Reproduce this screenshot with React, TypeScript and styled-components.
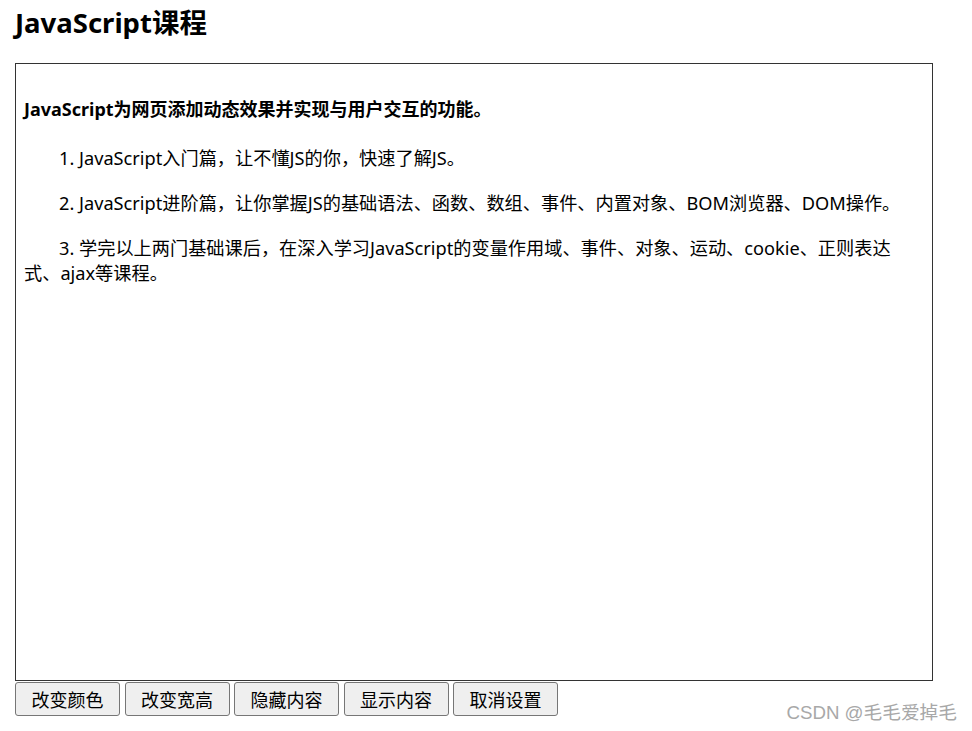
import { createGlobalStyle } from 'styled-components'
import styled from 'styled-components'

const GlobalStyle = createGlobalStyle`
  html, body {
    margin: 0;
    padding: 0;
    background: #fff;
  }
  body {
    font-family: 'Noto Sans', 'Noto Sans CJK SC', sans-serif;
    color: #000;
  }
`

const Page = styled.div`
  position: relative;
  width: 972px;
  height: 731px;
  padding: 6px 15px 0;
  box-sizing: border-box;
`

const Title = styled.h2`
  margin: 0 0 23px;
  font-size: 27.5px;
  line-height: 34px;
  font-weight: 700;
`

const Panel = styled.div`
  width: 918px;
  height: 618px;
  box-sizing: border-box;
  border: 1px solid #333;
  padding: 33px 8px 0;
`

const Lead = styled.h4`
  margin: 0 0 24px;
  font-size: 18px;
  line-height: 25px;
  font-weight: 700;
`

const Para = styled.p`
  margin: 0 0 20px;
  font-size: 18.2px;
  line-height: 25px;
  text-indent: 35px;
`

const ButtonRow = styled.div`
  display: flex;
  gap: 4.5px;
  margin-top: 1px;
`

const Button = styled.button`
  width: 105px;
  height: 34px;
  padding: 0;
  font-family: inherit;
  font-size: 18px;
  color: #000;
  background: #efefef;
  border: 1px solid #767676;
  border-radius: 3px;
`

const Watermark = styled.div`
  position: absolute;
  right: 15px;
  bottom: 7px;
  font-family: 'Liberation Sans', 'Noto Sans CJK SC', sans-serif;
  font-size: 18.7px;
  color: #a8a8a8;
`

const courses = [
  '1. JavaScript入门篇，让不懂JS的你，快速了解JS。',
  '2. JavaScript进阶篇，让你掌握JS的基础语法、函数、数组、事件、内置对象、BOM浏览器、DOM操作。',
  '3. 学完以上两门基础课后，在深入学习JavaScript的变量作用域、事件、对象、运动、cookie、正则表达式、ajax等课程。',
]

const actions = ['改变颜色', '改变宽高', '隐藏内容', '显示内容', '取消设置']

export default function App() {
  return (
    <>
      <GlobalStyle />
      <Page>
        <Title>JavaScript课程</Title>
        <Panel>
          <Lead>JavaScript为网页添加动态效果并实现与用户交互的功能。</Lead>
          {courses.map((text, i) => (
            <Para key={i}>{text}</Para>
          ))}
        </Panel>
        <ButtonRow>
          {actions.map((label) => (
            <Button key={label}>{label}</Button>
          ))}
        </ButtonRow>
        <Watermark>CSDN @毛毛爱掉毛</Watermark>
      </Page>
    </>
  )
}
